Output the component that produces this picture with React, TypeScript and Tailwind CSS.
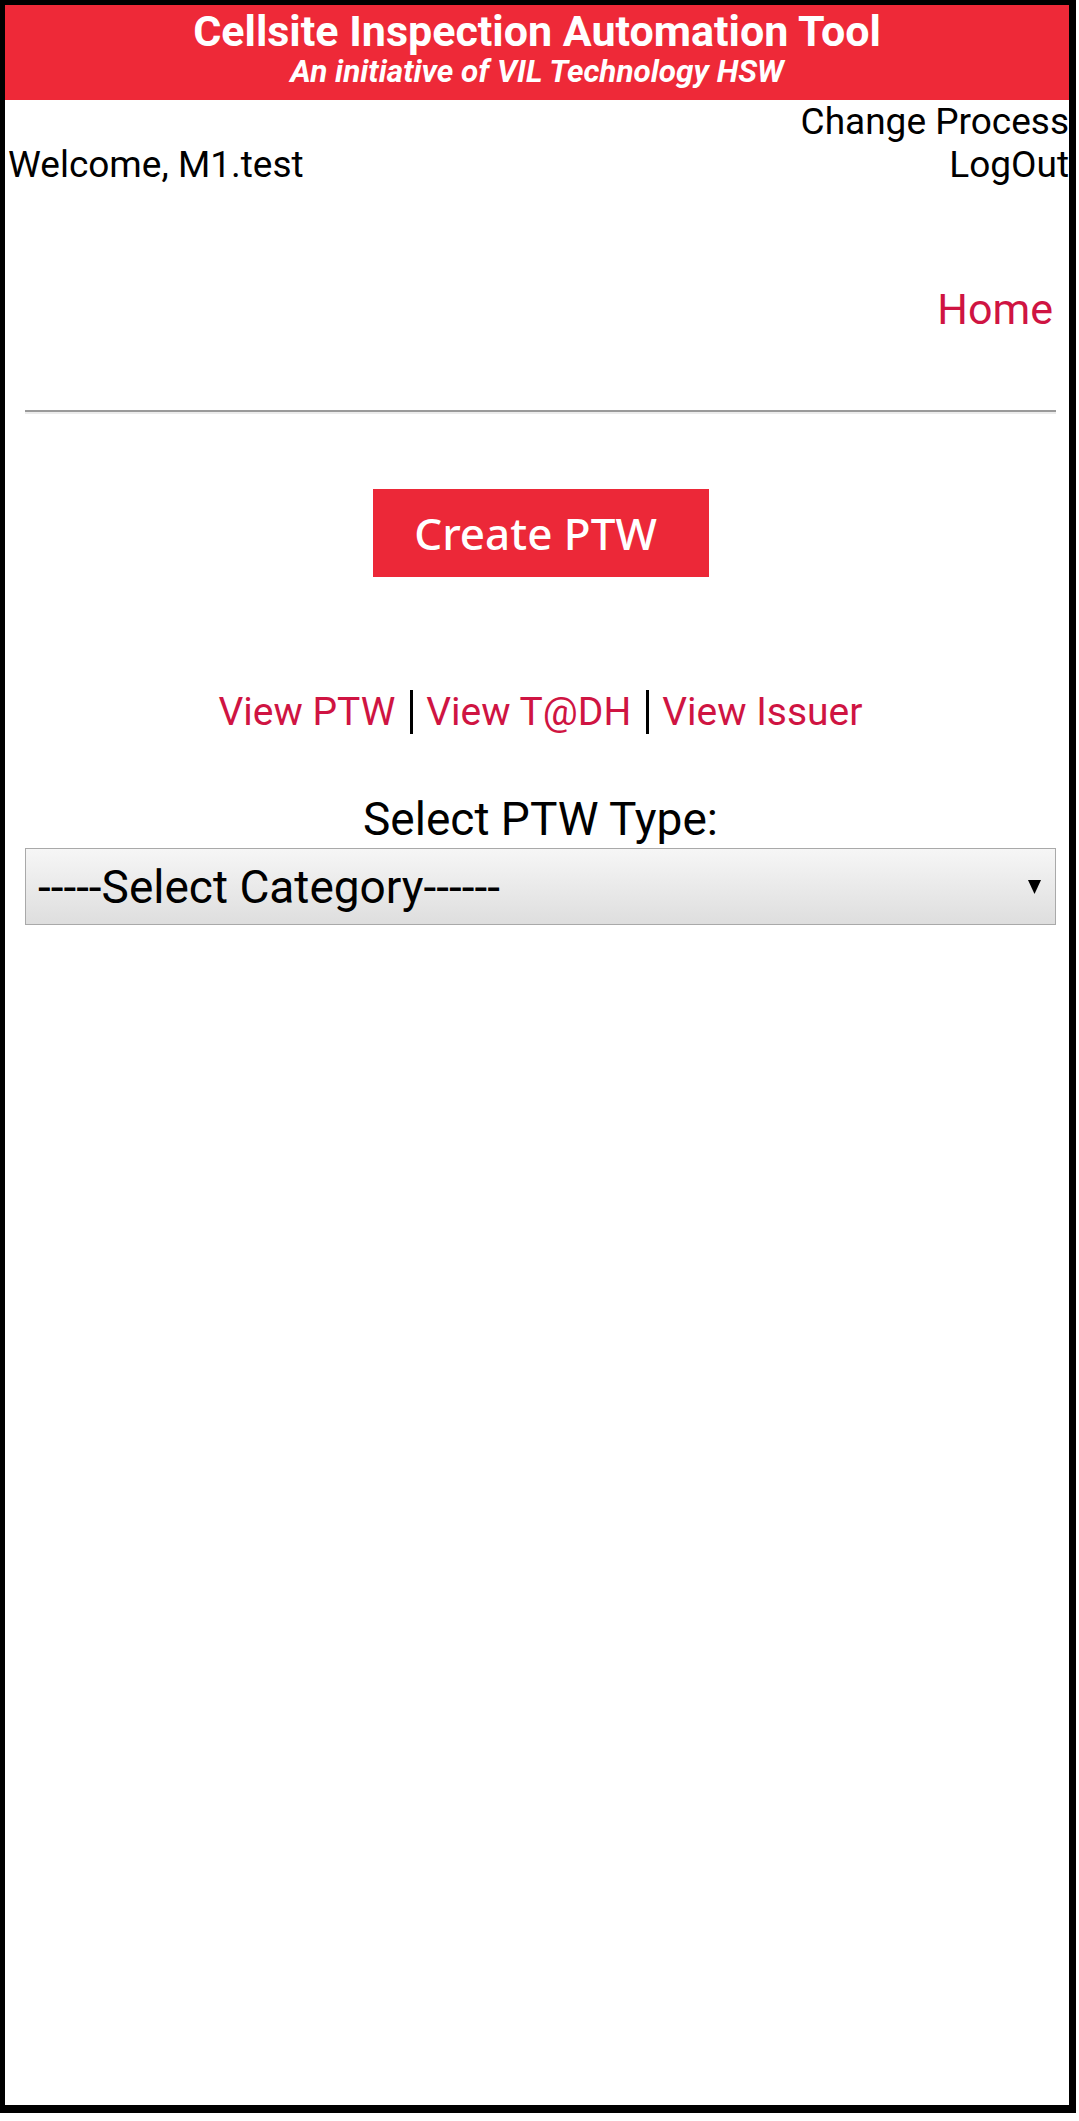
import React from "react";

export default function App() {
  const font = { fontFamily: "Roboto, 'Liberation Sans', sans-serif" } as React.CSSProperties;
  return (
    <div className="w-[1079px] h-[2121px] bg-white" style={font}>
      <div className="w-[1076px] h-[2113px] box-border border-black border-l-[5px] border-t-[5px] border-r-[7px] border-b-[8px] flex flex-col">
        <div className="h-[95px] bg-[#ee2938] flex flex-col items-center pt-[4px] text-white">
          <div className="text-[43px] leading-[44px] font-bold whitespace-nowrap">Cellsite Inspection Automation Tool</div>
          <div className="text-[31.5px] leading-[38px] font-bold italic whitespace-nowrap">An initiative of VIL Technology HSW</div>
        </div>

        <div className="flex items-end justify-between text-black text-[37px] leading-[43px] overflow-hidden">
          <div className="pl-[3px] whitespace-nowrap">Welcome, M1.test</div>
          <div className="flex flex-col items-end whitespace-nowrap">
            <div>Change Process</div>
            <div>LogOut</div>
          </div>
        </div>

        <div className="mt-[98px] pr-[16px] flex justify-end">
          <span className="text-[43px] leading-[50px] text-[#cf1442]">Home</span>
        </div>

        <div className="mt-[76px] ml-[20px] mr-[13px] h-0 border-t-[2px] border-t-[#9a9a9a] border-b-[2px] border-b-[#ececec]" />

        <div className="ml-[20px] mr-[13px] flex flex-col items-center">
          <div className="mt-[75px] w-[336px] h-[88px] bg-[#ec2838] flex items-center justify-center pr-[10px]">
            <span
              className="text-white text-[44px] leading-none font-medium"
              style={{ fontFamily: "'Noto Sans', 'Open Sans', sans-serif" }}
            >
              Create PTW
            </span>
          </div>

          <div className="mt-[112px] text-[39px] leading-[46px] whitespace-nowrap flex items-center">
            <span className="text-[#cf1442]">View PTW</span>
            <span className="inline-block w-[3px] h-[44px] bg-black ml-[15px] mr-[13px]" />
            <span className="text-[#cf1442]">View T@DH</span>
            <span className="inline-block w-[3px] h-[44px] bg-black ml-[15px] mr-[13px]" />
            <span className="text-[#cf1442]">View Issuer</span>
          </div>

          <div className="mt-[58px] text-[46px] leading-[53px] text-black">Select PTW Type:</div>

          <div className="mt-[2px] w-full h-[77px] box-border border border-[#a9a9a9] bg-gradient-to-b from-[#f6f6f6] to-[#dedede] flex items-center justify-between pl-[12px] pr-[14px]">
            <span className="text-[46px] leading-none text-black whitespace-nowrap">-----Select Category------</span>
            <svg width="13" height="14" viewBox="0 0 13 14">
              <polygon points="0,0 13,0 6.5,14" fill="#000" />
            </svg>
          </div>
        </div>
      </div>
    </div>
  );
}
